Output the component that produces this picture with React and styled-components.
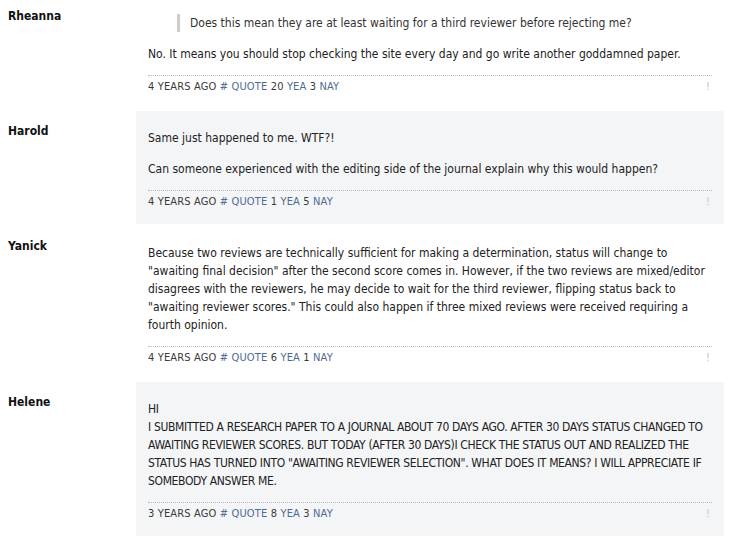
import styled, { createGlobalStyle } from "styled-components"

const Global = createGlobalStyle`
body{
    margin: 0;
    background: #ffffff;
    font-family: "DejaVu Sans Condensed", "Open Sans", sans-serif;
    color: #222222;
}
`;

const Thread = styled.div`
display: flex;
flex-direction: column;
gap: 2px;
width: 724px;
margin-top: -4px;
`;

const Row = styled.div`
display: grid;
grid-template-columns: 136px 1fr;
`;

const Author = styled.div`
padding: 11px 0 0 8px;
font-size: 12px;
line-height: 18px;
font-weight: 600;
color: #111111;
`;

const Body = styled.div`
background-color: ${p => p.shaded ? '#f4f5f7' : '#ffffff'};
padding: 18px 12px 13px 12px;
font-size: 12px;
line-height: 18px;
display: flex;
flex-direction: column;
gap: 13px;
`;

const Para = styled.p`
margin: 0;
letter-spacing: ${p => p.caps ? '-0.35px' : 'normal'};
`;

const Quote = styled.blockquote`
margin: 0 0 0 29px;
padding-left: 10px;
border-left: 3px solid #cccccc;
color: #333333;
`;

const Meta = styled.div`
display: flex;
justify-content: space-between;
align-items: center;
border-top: 1px dotted #bbbbbb;
margin-top: -1px;
padding-top: 2px;
font-size: 11px;
letter-spacing: 0.15px;
line-height: 18px;
text-transform: uppercase;
color: #3a3a3a;
a{
    color: #4f6a94;
    text-decoration: none;
}
.flag{
    color: #c4c4c4;
    padding-right: 2px;
}
`;

const posts = [
    {
        name: 'Rheanna',
        quote: 'Does this mean they are at least waiting for a third reviewer before rejecting me?',
        paras: ['No. It means you should stop checking the site every day and go write another goddamned paper.'],
        age: '4 years ago', yea: 20, nay: 3,
    },
    {
        name: 'Harold',
        paras: ['Same just happened to me. WTF?!', 'Can someone experienced with the editing side of the journal explain why this would happen?'],
        age: '4 years ago', yea: 1, nay: 5,
    },
    {
        name: 'Yanick',
        paras: ['Because two reviews are technically sufficient for making a determination, status will change to "awaiting final decision" after the second score comes in. However, if the two reviews are mixed/editor disagrees with the reviewers, he may decide to wait for the third reviewer, flipping status back to "awaiting reviewer scores." This could also happen if three mixed reviews were received requiring a fourth opinion.'],
        age: '4 years ago', yea: 6, nay: 1,
    },
    {
        name: 'Helene',
        caps: true,
        paras: [<>HI<br />I SUBMITTED A RESEARCH PAPER TO A JOURNAL ABOUT 70 DAYS AGO. AFTER 30 DAYS STATUS CHANGED TO AWAITING REVIEWER SCORES. BUT TODAY (AFTER 30 DAYS)I CHECK THE STATUS OUT AND REALIZED THE STATUS HAS TURNED INTO "AWAITING REVIEWER SELECTION". WHAT DOES IT MEANS? I WILL APPRECIATE IF SOMEBODY ANSWER ME.</>],
        age: '3 years ago', yea: 8, nay: 3,
    },
];

export default function App(){
    return(
        <>
            <Global />
            <Thread>
                {posts.map((post, i) => (
                    <Row key={post.name}>
                        <Author>{post.name}</Author>
                        <Body shaded={i % 2 === 1}>
                            {post.quote && <Quote>{post.quote}</Quote>}
                            {post.paras.map((text, j) => <Para key={j} caps={post.caps}>{text}</Para>)}
                            <Meta>
                                <span>
                                    {post.age} <a href="#">#</a> <a href="#">Quote</a> {post.yea} <a href="#">Yea</a> {post.nay} <a href="#">Nay</a>
                                </span>
                                <span className="flag">!</span>
                            </Meta>
                        </Body>
                    </Row>
                ))}
            </Thread>
        </>
    )
}
